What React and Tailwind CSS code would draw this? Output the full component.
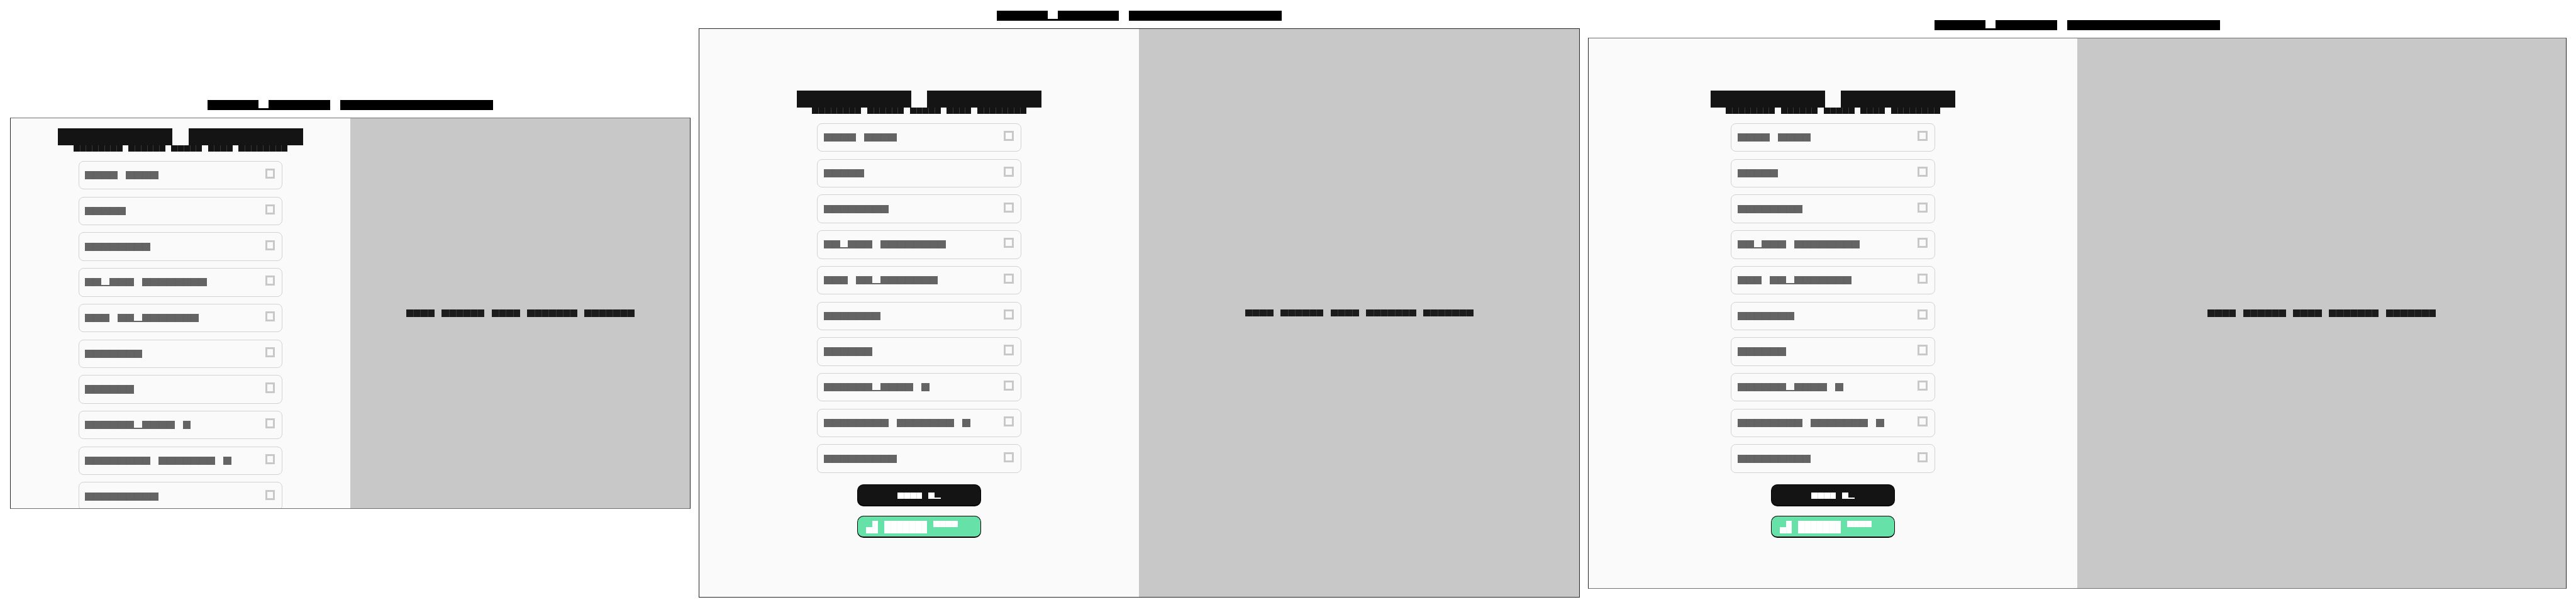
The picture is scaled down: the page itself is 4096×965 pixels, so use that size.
const OPTIONS = [
  "xxxx xxxx",
  "xxxxx",
  "xxxxxxxx",
  "xxpxxx xxxxxxxx",
  "xxx xxpxxxxxxx",
  "xxxxxxx",
  "xxxxxx",
  "xxxxxxpxxxx x",
  "xxxxxxxx xxxxxxx x",
  "xxxxxxxxx",
];

// A line of placeholder text: "x" is a full block, "p" a descender block, " " a gap.
function Blocks({ pattern, cell, height, fill, seam }) {
  return (
    <div className={`flex shrink-0 items-stretch ${height}`}>
      {pattern.split("").map((c, i) => {
        const joined = i > 0 && c === "x" && pattern[i - 1] === "x";
        return (
          <div key={i} className={`flex shrink-0 flex-col justify-end ${cell}`}>
            {c === "x" && <div className={`h-full ${fill} ${joined && seam ? `border-l ${seam}` : ""}`} />}
            {c === "p" && <div className={`h-1/5 ${fill}`} />}
          </div>
        );
      })}
    </div>
  );
}

function Option({ pattern }) {
  return (
    <div className="flex h-[45.4px] w-[324.2px] shrink-0 items-start justify-between rounded-[8px] border border-[#d2d2d2] pr-[10.8px] pl-[9.2px]">
      <div className="pt-[15.2px]">
        <Blocks pattern={pattern} cell="w-[12.967px]" height="h-[13.2px]" fill="bg-[#646464]" seam="border-[#606060]" />
      </div>
      <div className="mt-[11.2px] h-[16.2px] w-[15.4px] border-[3px] border-[#c8c8c8]" />
    </div>
  );
}

function Form({ top }) {
  return (
    <div className={`flex h-full flex-col items-center bg-[#fafafa] ${top}`}>
      <div className="flex h-[52px] shrink-0 flex-col items-center">
        <div className="z-10 flex h-[27px] shrink-0 gap-[25.1px]">
          <div className="w-[182.35px] bg-[#141414]" />
          <div className="w-[182.35px] bg-[#141414]" />
        </div>
        <div className="-mt-[0.5px]">
          <Blocks
            pattern="xxxxxxxx xxxxxx xxxxx xxxx xxxxxxxx"
            cell="w-[9.725px]"
            height="h-[10px]"
            fill="bg-[#141414]"
            seam="border-[#3a3a3a]"
          />
        </div>
      </div>
      <div className="flex shrink-0 flex-col gap-[11.32px]">
        {OPTIONS.map((pattern, i) => (
          <Option key={i} pattern={pattern} />
        ))}
      </div>
      <button className="mt-[17.8px] flex h-[35.7px] w-[197.7px] shrink-0 justify-center rounded-[10px] border border-b-2 border-black bg-[#141414] pt-[12.2px]">
        <Blocks pattern="xxxx xp" cell="w-[9.725px]" height="h-[10.3px]" fill="bg-white" seam="border-[#e0e0e0]" />
      </button>
      <button className="mt-[14.6px] flex h-[35.7px] w-[197.7px] shrink-0 flex-col items-start rounded-[10px] border border-b-2 border-black bg-[#66e2a9] pt-[7.2px] pl-[13.4px]">
        <Blocks pattern=" x xxxxxxx xxxx" cell="w-[9.725px]" height="h-[10px]" fill="bg-white" seam="border-[#f2fcf7]" />
        <Blocks pattern="xx xxxxxxx" cell="w-[9.725px]" height="h-[10px]" fill="bg-white" seam="border-[#f2fcf7]" />
      </button>
    </div>
  );
}

function Screen({ title, pad, frame, left, formTop }) {
  return (
    <section className={`flex shrink-0 flex-col items-center ${pad}`}>
      <Blocks pattern={title} cell="w-[16.21px]" height="h-[16px]" fill="bg-black" />
      <div className={`mt-[12px] flex shrink-0 overflow-hidden border ${frame}`}>
        <div className={`h-full shrink-0 ${left}`}>
          <Form top={formTop} />
        </div>
        <div className="flex h-full flex-1 items-center justify-center bg-[#c8c8c8]">
          <Blocks
            pattern="xxxx xxxxxx xxxx xxxxxxx xxxxxxx"
            cell="w-[11.346px]"
            height="h-[11.5px]"
            fill="bg-[#1c1c1c]"
            seam="border-[#363636]"
          />
        </div>
      </div>
    </section>
  );
}

export default function App() {
  const title = "xxxxxpxxxxxx xxxxxxxxxxxxxxx";
  return (
    <main className="flex h-[965px] w-[4096px] items-start overflow-hidden bg-white pl-[16px]">
      <Screen
        title={title}
        pad="pt-[159px]"
        frame="h-[622px] w-[1082px] border-x-[#262626] border-y-[#707070]"
        left="w-[540px]"
        formTop="pt-[16px]"
      />
      <Screen
        title={title}
        pad="ml-[13px] pt-[17px]"
        frame="h-[905px] w-[1401px] border-[#262626]"
        left="w-[699px]"
        formTop="pt-[98px]"
      />
      <Screen
        title={title}
        pad="ml-[13px] pt-[32px]"
        frame="h-[876px] w-[1556px] border-x-[#262626] border-y-[#707070]"
        left="w-[777px]"
        formTop="pt-[83px]"
      />
    </main>
  );
}
